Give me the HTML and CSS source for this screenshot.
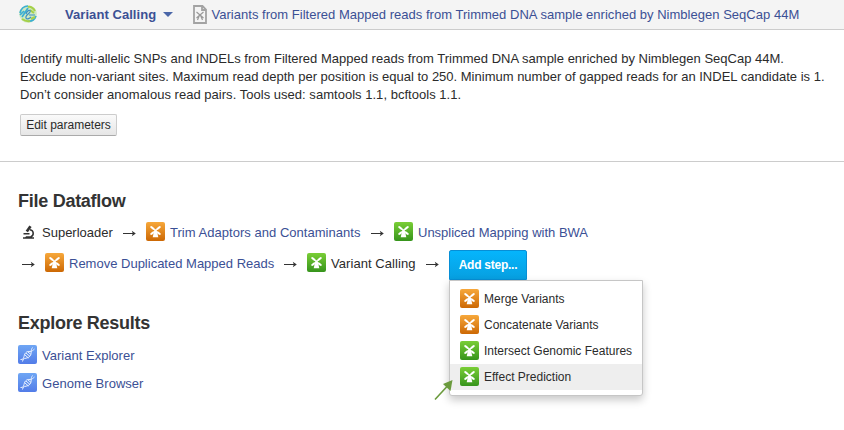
FILE: index.html
```html
<!DOCTYPE html>
<html lang="en">
<head>
<meta charset="utf-8">
<title>Variant Calling</title>
<link rel="stylesheet" href="styles.css">
</head>
<body>
<svg class="defs" width="0" height="0" aria-hidden="true">
  <linearGradient id="orange" x2="0" y2="1"><stop stop-color="#f7a83b"/><stop offset="1" stop-color="#cc6804"/></linearGradient>
  <linearGradient id="green" x2="0" y2="1"><stop stop-color="#7ace36"/><stop offset="1" stop-color="#36941c"/></linearGradient>
  <linearGradient id="blue" x2="0" y2="1"><stop stop-color="#6fa6f4"/><stop offset="1" stop-color="#527ce8"/></linearGradient>
  <symbol id="mill" viewBox="0 0 19 19">
    <path d="M4.500 4.500 14.500 12.500M14.500 4.500 4.500 12.500" stroke="#fff" stroke-width="1.200"/>
    <path d="M5 4.800 8 7.200M14 4.800 11 7.200M5 12.300 7.500 10.300M14 12.300 11.500 10.300" stroke="#fff" stroke-width="2.100"/>
    <path d="M9.500 7 11 9.500 12.300 15.200H6.700L8 9.500Z" fill="#fff"/>
  </symbol>
  <symbol id="dna" viewBox="0 0 19 19">
    <path d="M2.500 14.500C5 14.500 5.500 14 6 11.500 6.800 7.500 9 6 12 6.500c2-.2 3-1.200 4.500-2.500M4.500 16.500C5 14 6 13.500 8 13.200c3.500-.5 5.300-2.700 5.200-6.200 0-2 .3-3 1.300-4.500M7 10l3.500 3M8 8l4 3.500M10 7l3 2.500" fill="none" stroke="#e7f0ff" stroke-width="1"/>
  </symbol>
  <symbol id="arrow" viewBox="0 0 13 7">
    <path d="M0 3.500h11" fill="none" stroke="#333"/>
    <path d="m8.800 .8 4 2.700-4 2.700 1-2.700Z" fill="#333"/>
  </symbol>
</svg>

<header class="topbar">
  <svg class="logo" viewBox="0 0 18 18">
    <circle cx="9" cy="9" r="8.800" fill="#cfe9c0"/>
    <path d="M1 8C2 4 5 1 9 1M3 12 9 3M1 10l4-4M9 16c4 1 7-2 8-5" fill="none" stroke="#3aaed4" stroke-width="1.700"/>
    <path d="M9 2c3-1 6 2 7 4M11 5l4 3M3 14c3 2 5 3 8 2M12 14l4-2" fill="none" stroke="#a6d048" stroke-width="2"/>
    <path d="M7 9c1-4 5-5 4-2-1 2-5 3-4 6 1 2 4 0 5-1M10 10h6" fill="none" stroke="#3b8fc4" stroke-width="1.200"/>
  </svg>
  <a class="app">Variant Calling</a>
  <span class="caret"></span>
  <svg class="doc" viewBox="0 0 14 19">
    <path d="M1 1h8.500L13 4.500V18H1ZM9 1v4h4" fill="none" stroke="#a3a3a3" stroke-width="1.800"/>
    <path d="m3.500 7 7 6M10.500 7l-7 6M7 9l2.500 6M7 9l-2.500 6" fill="none" stroke="#999" stroke-width="1.200"/>
  </svg>
  <a class="name">Variants from Filtered Mapped reads from Trimmed DNA sample enriched by Nimblegen SeqCap 44M</a>
</header>

<section class="summary">
  <p><span class="l1">Identify multi-allelic SNPs and INDELs from Filtered Mapped reads from Trimmed DNA sample enriched by Nimblegen SeqCap 44M.</span><br><span class="l2">Exclude non-variant sites. Maximum read depth per position is equal to 250. Minimum number of gapped reads for an INDEL candidate is 1.</span><br><span class="l3">Don’t consider anomalous read pairs. Tools used: samtools 1.1, bcftools 1.1.</span></p>
  <button class="edit">Edit parameters</button>
</section>

<main>
  <h2>File Dataflow</h2>
  <div class="flow">
    <svg class="scope" viewBox="0 0 13 14"><path d="M8.500 1.200 4.800 6.500" fill="none" stroke="#333" stroke-width="2.700"/><path d="M8 4.800c4 .8 4.300 5.200.8 7.200M1.500 8.700h6M1 13h11" fill="none" stroke="#333" stroke-width="1.500"/><path d="M4 11.200h6V13H3Z" fill="#333"/></svg>
    <span class="label t0">Superloader</span>
    <svg class="arrow"><use href="#arrow"/></svg>
    <svg class="ico"><rect width="19" height="19" rx="2" fill="url(#orange)"/><use href="#mill"/></svg>
    <a class="label t1">Trim Adaptors and Contaminants</a>
    <svg class="arrow"><use href="#arrow"/></svg>
    <svg class="ico"><rect width="19" height="19" rx="2" fill="url(#green)"/><use href="#mill"/></svg>
    <a class="label">Unspliced Mapping with BWA</a>
  </div>
  <div class="flow second">
    <svg class="arrow first"><use href="#arrow"/></svg>
    <svg class="ico"><rect width="19" height="19" rx="2" fill="url(#orange)"/><use href="#mill"/></svg>
    <a class="label t2">Remove Duplicated Mapped Reads</a>
    <svg class="arrow"><use href="#arrow"/></svg>
    <svg class="ico"><rect width="19" height="19" rx="2" fill="url(#green)"/><use href="#mill"/></svg>
    <span class="label t3">Variant Calling</span>
    <svg class="arrow"><use href="#arrow"/></svg>
    <div class="step">
      <button class="add">Add step...</button>
      <ul class="menu">
        <li><svg class="ico"><rect width="19" height="19" rx="2" fill="url(#orange)"/><use href="#mill"/></svg><span>Merge Variants</span></li>
        <li><svg class="ico"><rect width="19" height="19" rx="2" fill="url(#orange)"/><use href="#mill"/></svg><span>Concatenate Variants</span></li>
        <li><svg class="ico"><rect width="19" height="19" rx="2" fill="url(#green)"/><use href="#mill"/></svg><span>Intersect Genomic Features</span></li>
        <li class="active"><svg class="ico"><rect width="19" height="19" rx="2" fill="url(#green)"/><use href="#mill"/></svg><span>Effect Prediction</span></li>
      </ul>
      <svg class="pointer" viewBox="0 0 20 22"><path d="M1 20.500 13 7.500" stroke="#6a9a3c" stroke-width="1.600"/><path d="M18.500 1 16.500 12 9 5Z" fill="#6a9a3c"/></svg>
    </div>
  </div>

  <h2 class="explore">Explore Results</h2>
  <div class="result"><svg class="ico"><rect width="19" height="19" rx="2" fill="url(#blue)"/><use href="#dna"/></svg><a>Variant Explorer</a></div>
  <div class="result"><svg class="ico"><rect width="19" height="19" rx="2" fill="url(#blue)"/><use href="#dna"/></svg><a>Genome Browser</a></div>
</main>
</body>
</html>
```
FILE: styles.css
```css
* { box-sizing: border-box; }
body { margin: 0; height: 430px; overflow: hidden; background: #fff; color: #2b2b2b; font: 13px/18px "Liberation Sans", Arial, sans-serif; }
.defs { position: absolute; }
svg { display: block; flex: none; }
a { color: #3b5095; white-space: nowrap; }
button { font-family: inherit; }
.topbar { display: flex; align-items: center; height: 30px; padding: 0 0 1px 19px; background: #f4f4f4; border-bottom: 1px solid #ccc; }
.logo { width: 18px; height: 18px; margin-right: 28px; }
.app { width: 92px; padding-top: 2px; font-weight: bold; letter-spacing: .06px; }
.name { padding-top: 2px; letter-spacing: .022px; }
.caret { margin: 1px 20px 0 6px; border: 5px solid transparent; border-top-color: #4a66a8; border-bottom: 0; }
.doc { width: 14px; height: 19px; margin: 0 4.500px 0 0; }
.summary { height: 132px; padding: 20px 20px 0; border-bottom: 1px solid #ccc; }
.summary p { margin: 0 0 10px; white-space: nowrap; }
.l1 { letter-spacing: .008px; }
.l3 { letter-spacing: .026px; }
.edit { display: block; width: 97px; height: 22px; padding: 0; border: 1px solid #ccc; border-bottom-color: #aaa; border-radius: 2px; background: linear-gradient(#fafafa, #e6e6e6); color: #2b2b2b; font-size: 12px; line-height: 19px; }
main { padding: 28px 18px 0; }
h2 { margin: 0; font-size: 18px; line-height: 22px; letter-spacing: -.27px; color: #333; }
.flow { display: flex; align-items: center; height: 19px; margin-top: 10px; }
.second { align-items: flex-start; height: 30px; margin-top: 9px; }
.ico { width: 19px; height: 19px; }
.scope { width: 13px; height: 14px; margin: 0 7px 0 4px; }
.label { margin-left: 5px; padding-top: 2px; white-space: nowrap; }
.t0 { width: 71px; margin-left: 0; }
.t1 { width: 191px; letter-spacing: .03px; }
.t2 { width: 205px; }
.t3 { width: 85px; letter-spacing: .06px; }
.second > .ico { margin-top: 3px; }
.second > .label { padding-top: 5px; }
.arrow { width: 13px; height: 7px; margin: 4px 10px 0; }
.second > .arrow { margin-top: 11px; }
.arrow.first { margin-left: 4px; }
.step { position: relative; }
.add { display: block; width: 78px; height: 30px; padding: 0; border: 1px solid #078fd6; border-radius: 2px 2px 0 0; background: linear-gradient(#05b5fc, #079fe0); color: #fff; font-size: 12px; font-weight: bold; letter-spacing: -.25px; }
.menu { position: absolute; top: 30px; left: 0; width: 194px; height: 116px; margin: 0; padding: 5px 0; list-style: none; background: #fff; border: 1px solid #c6c6c6; border-radius: 0 0 3px 3px; box-shadow: 0 4px 9px rgba(0,0,0,.22); font-size: 12px; }
.menu li { display: flex; align-items: center; gap: 5px; height: 26px; padding: 0 10px 2px; white-space: nowrap; }
.menu span { padding-top: 2px; }
.menu .active { background: #eee; }
.pointer { position: absolute; left: -15px; top: 129px; width: 20px; height: 22px; }
.explore { margin-top: 32px; margin-bottom: 11px; }
.result { display: flex; align-items: center; gap: 5px; height: 19px; margin-bottom: 9px; }
.result a { padding-top: 3px; letter-spacing: .02px; }
```
